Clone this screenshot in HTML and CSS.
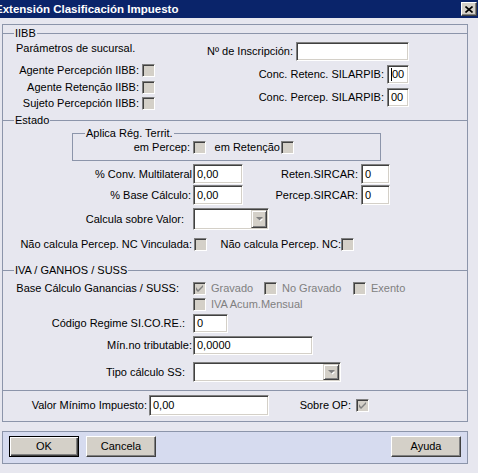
FILE: index.html
```html
<!DOCTYPE html>
<html>
<head>
  <meta charset="utf-8">
  <title>Extensión Clasificación Impuesto</title>
  <link rel="stylesheet" href="styles.css">
</head>
<body>
  <div class="titlebar">
    <span class="title">Extensión Clasificación Impuesto</span>
    <span class="close">
      <svg width="8" height="7" viewBox="0 0 8 7"><path d="M0.5 0.5 L7.5 6.5 M7.5 0.5 L0.5 6.5" stroke="#000" stroke-width="1.6" fill="none"/></svg>
    </span>
  </div>

  <div class="dialog">
    <!-- IIBB -->
    <fieldset class="sec sec-iibb">
      <legend>IIBB</legend>
      <div class="iibb">
        <div class="iibb-left">
          <div class="note">Parámetros de sucursal.</div>
          <div class="crow mt9"><span>Agente Percepción IIBB:</span><span class="chk"></span></div>
          <div class="crow mt4"><span>Agente Retenção IIBB:</span><span class="chk"></span></div>
          <div class="crow mt3"><span>Sujeto Percepción IIBB:</span><span class="chk"></span></div>
        </div>
        <div class="iibb-right">
          <div class="frow mt2"><span>Nº de Inscripción:</span><span class="field h19 w113"></span></div>
          <div class="frow mt4"><span>Conc. Retenc. SILARPIB:</span><span class="field h19 w22"><i class="caret"></i>00</span></div>
          <div class="frow mt4"><span>Conc. Percep. SILARPIB:</span><span class="field h19 w22">00</span></div>
        </div>
      </div>
    </fieldset>

    <!-- Estado -->
    <fieldset class="sec sec-estado">
      <legend>Estado</legend>
      <fieldset class="aplica">
        <legend>Aplica Rég. Territ.</legend>
        <div class="aplica-row">
          <span class="ap-lbl1">em Percep:</span><span class="chk"></span>
          <span class="ap-lbl2">em Retenção</span><span class="chk"></span>
        </div>
      </fieldset>

      <div class="row mt3">
        <span class="c1 pr1">% Conv. Multilateral</span><span class="field h20 w50">0,00</span>
        <span class="c3">Reten.SIRCAR:</span><span class="field h20 w29">0</span>
      </div>
      <div class="row mt1">
        <span class="c1 pr2">% Base Cálculo:</span><span class="field h20 w50">0,00</span>
        <span class="c3">Percep.SIRCAR:</span><span class="field h20 w29">0</span>
      </div>
      <div class="row mt3">
        <span class="c1 pr9">Calcula sobre Valor:</span>
        <span class="select h22 w76"><span class="drop"><svg width="7" height="5" viewBox="0 0 7 5"><path d="M1 1 H6 L3.5 3.5 Z" fill="#fff" transform="translate(1 1)"/><path d="M0 0 H7 L3.5 3.5 Z" fill="#808080"/></svg></span></span>
      </div>
      <div class="row mt8">
        <span class="c1 nc1">Não calcula Percep. NC Vinculada:</span><span class="chk"></span>
        <span class="nc2">Não calcula Percep. NC:</span><span class="chk"></span>
      </div>
    </fieldset>

    <!-- IVA / GANHOS / SUSS -->
    <fieldset class="sec sec-iva">
      <legend>IVA / GANHOS / SUSS</legend>
      <div class="row mt5">
        <span class="c1 pr14">Base Cálculo Ganancias / SUSS:</span>
        <span class="opt opt1"><span class="chk"><svg width="7" height="7" viewBox="0 0 7 7"><path d="M0 2 L0 5 L2 7 L7 2 L7 0 L2 5 Z" fill="#808080"/></svg></span><span class="dis">Gravado</span></span>
        <span class="opt opt2"><span class="chk"></span><span class="dis">No Gravado</span></span>
        <span class="opt"><span class="chk"></span><span class="dis">Exento</span></span>
      </div>
      <div class="row mt3">
        <span class="c1"></span>
        <span class="opt"><span class="chk"></span><span class="dis">IVA Acum.Mensual</span></span>
      </div>
      <div class="row mt3">
        <span class="c1 pr8">Código Regime SI.CO.RE.:</span><span class="field h19 w35">0</span>
      </div>
      <div class="row mt3">
        <span class="c1 pr1">Mín.no tributable:</span><span class="field h19 w120">0,0000</span>
      </div>
      <div class="row mt7">
        <span class="c1 pr8">Tipo cálculo SS:</span>
        <span class="select h20 w148"><span class="drop"><svg width="7" height="5" viewBox="0 0 7 5"><path d="M1 1 H6 L3.5 3.5 Z" fill="#fff" transform="translate(1 1)"/><path d="M0 0 H7 L3.5 3.5 Z" fill="#808080"/></svg></span></span>
      </div>
    </fieldset>

    <!-- Valor minimo -->
    <div class="sec-plain">
      <div class="row">
        <span class="vm-lbl">Valor Mínimo Impuesto:</span><span class="field h21 w120">0,00</span>
        <span class="op-lbl">Sobre OP:</span><span class="chk"><svg width="7" height="7" viewBox="0 0 7 7"><path d="M0 2 L0 5 L2 7 L7 2 L7 0 L2 5 Z" fill="#808080"/></svg></span>
      </div>
    </div>
  </div>

  <div class="buttons">
    <span class="btn default"><span>OK</span></span>
    <span class="btn"><span>Cancela</span></span>
    <span class="btn right"><span>Ayuda</span></span>
  </div>
</body>
</html>
```

FILE: styles.css
```css
* {
  box-sizing: border-box;
}

body {
  margin: 0;
  background: #e7e7ef;
  color: #000;
  font-family: "Liberation Sans", Arial, sans-serif;
  font-size: 11px;
  line-height: 13px;
}

/* title bar */
.titlebar {
  height: 18px;
  background: #0a246a;
  display: flex;
  align-items: center;
  justify-content: space-between;
  overflow: hidden;
}

.title {
  color: #fff;
  font-size: 11.5px;
  font-weight: bold;
  margin-left: -5px;
  white-space: nowrap;
}

.close {
  width: 16px;
  height: 14px;
  margin-right: 1px;
  background: #d4d0c8;
  border: 1px solid;
  border-color: #fff #404040 #404040 #fff;
  box-shadow: inset -1px -1px #808080;
  display: flex;
  align-items: center;
  justify-content: center;
}

/* dialog body */
.dialog {
  margin: 6px 0 0 2px;
  width: 466px;
  border: 1px solid #8c95aa;
  padding-top: 2px;
}

.sec {
  margin: 0;
  padding: 0;
  border: 0;
  border-top: 1px solid #8c95aa;
  min-width: 0;
}

.sec > legend {
  margin-left: 11px;
  padding: 0 1px;
}

.sec-iibb {
  padding-bottom: 4px;
}

.sec-estado {
  padding-bottom: 13px;
}

.sec-iva {
  padding-bottom: 8px;
}

.sec-plain {
  border-top: 1px solid #8c95aa;
  padding: 4px 0 5px;
}

/* IIBB */
.iibb {
  display: flex;
}

.iibb-left {
  width: 152px;
}

.iibb-right {
  width: 254px;
}

.note {
  margin-top: 2px;
  padding-left: 13px;
}

.crow {
  display: flex;
  justify-content: flex-end;
  align-items: center;
  gap: 3px;
  height: 13px;
  white-space: nowrap;
}

.frow {
  display: flex;
  justify-content: flex-end;
  align-items: center;
  gap: 3px;
  white-space: nowrap;
}

/* generic rows */
.row {
  display: flex;
  align-items: center;
  white-space: nowrap;
}

.c1 {
  width: 190px;
  flex: none;
  text-align: right;
}

.c3 {
  width: 118px;
  flex: none;
  text-align: right;
  padding-right: 3px;
}

.pr1 { padding-right: 1px; }
.pr2 { padding-right: 2px; }
.pr8 { padding-right: 8px; }
.pr9 { padding-right: 9px; }
.pr14 { padding-right: 14px; }

.mt1 { margin-top: 1px; }
.mt2 { margin-top: 2px; }
.mt3 { margin-top: 3px; }
.mt4 { margin-top: 4px; }
.mt5 { margin-top: 5px; }
.mt7 { margin-top: 7px; }
.mt8 { margin-top: 8px; }
.mt9 { margin-top: 9px; }

/* Aplica Rég. Territ. */
.aplica {
  margin: 0 0 0 69px;
  width: 309px;
  min-width: 0;
  padding: 0 0 6px;
  border: 1px solid #8c95aa;
}

.aplica > legend {
  margin-left: 12px;
  padding: 0 1px;
}

.aplica-row {
  display: flex;
  align-items: center;
  height: 13px;
  margin-top: 1px;
  white-space: nowrap;
}

.ap-lbl1 {
  width: 120px;
  text-align: right;
  padding-right: 3px;
}

.ap-lbl2 {
  width: 75px;
  text-align: right;
  padding-right: 1px;
}

.nc1 {
  width: 191px;
  padding-right: 2px;
}

.nc2 {
  width: 134px;
  text-align: right;
}

/* options */
.opt {
  display: flex;
  align-items: center;
  gap: 5px;
}

.opt1 {
  width: 71px;
}

.opt2 {
  width: 89px;
}

.dis {
  color: #808080;
}

/* Valor minimo */
.vm-lbl {
  width: 146px;
  text-align: right;
  padding-right: 2px;
}

.op-lbl {
  width: 87px;
  text-align: right;
  padding-right: 5px;
}

/* controls */
.field {
  flex: none;
  display: flex;
  align-items: center;
  padding-left: 3px;
  background: #fff;
  border: 1px solid;
  border-color: #808080 #fff #fff #808080;
  box-shadow: inset 1px 1px #404040, inset -1px -1px #d4d0c8;
}

.caret {
  display: inline-block;
  width: 1px;
  height: 13px;
  background: #000;
}

.h19 { height: 19px; }
.h20 { height: 20px; }
.h21 { height: 21px; }
.h22 { height: 22px; }
.w22 { width: 22px; }
.w29 { width: 29px; }
.w35 { width: 35px; }
.w50 { width: 50px; }
.w76 { width: 76px; }
.w113 { width: 113px; }
.w120 { width: 120px; }
.w148 { width: 148px; }

.chk {
  flex: none;
  width: 13px;
  height: 13px;
  display: flex;
  align-items: center;
  justify-content: center;
  background: #d4d0c8;
  border: 1px solid;
  border-color: #808080 #fff #fff #808080;
  box-shadow: inset 1px 1px #404040, inset -1px -1px #d4d0c8;
}

.select {
  flex: none;
  display: flex;
  justify-content: flex-end;
  padding: 1px;
  background: #fff;
  border: 1px solid;
  border-color: #808080 #fff #fff #808080;
  box-shadow: inset 1px 1px #404040, inset -1px -1px #d4d0c8;
}

.drop {
  width: 16px;
  height: 100%;
  display: flex;
  align-items: center;
  justify-content: center;
  background: #d4d0c8;
  border: 1px solid;
  border-color: #d4d0c8 #404040 #404040 #d4d0c8;
  box-shadow: inset 1px 1px #fff, inset -1px -1px #808080;
}

/* bottom buttons */
.buttons {
  margin: 9px 0 0 2px;
  width: 466px;
  display: flex;
  gap: 7px;
  padding: 4px 6px 6px;
  background: #d6dbef;
  border: 1px solid #8c95aa;
}

.btn {
  width: 70px;
  height: 21px;
  display: flex;
  align-items: center;
  justify-content: center;
  background: #d4d0c8;
  border: 1px solid;
  border-color: #fff #404040 #404040 #fff;
  box-shadow: inset -1px -1px #808080;
}

.btn.default {
  border: 1px solid #000;
  box-shadow: inset 1px 1px #fff, inset -1px -1px #404040, inset -2px -2px #808080;
}

.btn.right {
  margin-left: auto;
}
```
